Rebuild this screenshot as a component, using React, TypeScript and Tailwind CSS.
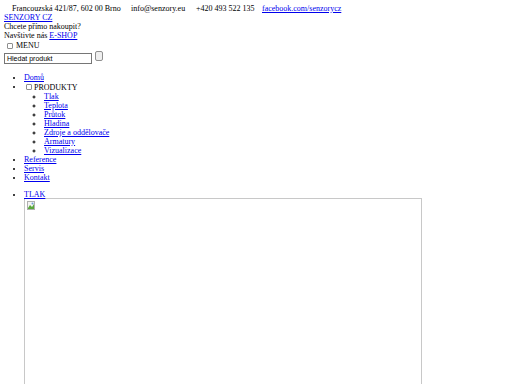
import React from 'react';

const Box: React.FC<{ className?: string }> = ({ className = '' }) => (
  <span className={`inline-block w-[6px] h-[6px] border border-[#8f8f8f] rounded-[1px] bg-white ${className}`}></span>
);

const A: React.FC<{ children: React.ReactNode }> = ({ children }) => (
  <a href="#" className="text-[#0000ee] underline">{children}</a>
);

const App: React.FC = () => {
  const sub = ['Tlak', 'Teplota', 'Průtok', 'Hladina', 'Zdroje a oddělovače', 'Armatury', 'Vizualizace'];

  return (
    <div className="min-h-[384px] bg-white text-black font-['Liberation_Serif',serif] text-[8px] leading-[9px] px-[4px] pt-[4px] overflow-hidden">
      {/* top info line */}
      <div className="flex pl-[8px] whitespace-nowrap">
        <span className="w-[119px]">Francouzská 421/87, 602 00 Brno</span>
        <span className="w-[65px]">info@senzory.eu</span>
        <span className="w-[66px]">+420 493 522 135</span>
        <A>facebook.com/senzorycz</A>
      </div>
      <div><A>SENZORY CZ</A></div>
      <div>Chcete přímo nakoupit?</div>
      <div>Navštivte nás <A>E-SHOP</A></div>
      <div className="flex items-center h-[11px] pl-[3px] gap-[3px]">
        <Box />
        <span>MENU</span>
      </div>
      <div className="flex items-start gap-[3px]">
        <div className="w-[88px] h-[11px] mt-[2px] border border-[#767676] px-[2px] font-['Liberation_Sans',sans-serif] text-[7px] leading-[9px]">Hledat produkt</div>
        <div className="w-[8px] h-[10px] border border-[#8f8f8f] rounded-[2px] bg-[#efefef]"></div>
      </div>

      <ul className="list-disc pl-[20px] mt-[9px]">
        <li><A>Domů</A></li>
        <li>
          <span className="inline-flex items-center h-[10px] gap-[2px] pl-[2px] align-top"><Box /> PRODUKTY</span>
          <ul className="list-[circle] pl-[20px]">
            {sub.map((s) => (
              <li key={s}><A>{s}</A></li>
            ))}
          </ul>
        </li>
        <li><A>Reference</A></li>
        <li><A>Servis</A></li>
        <li><A>Kontakt</A></li>
      </ul>

      <ul className="list-disc pl-[20px] mt-[8px]">
        <li>
          <A>TLAK</A>
          <div className="w-[398px] h-[200px] -mt-[1px] border border-[#c8c8c8] p-[2px]">
            <svg width="8" height="9" viewBox="0 0 8 9">
              <rect x="0.5" y="0.5" width="7" height="8" fill="#f4f4f4" stroke="#b0b0b0" />
              <path d="M1 7 L3 4 L5 6 L7 3 L7 8 L1 8 Z" fill="#5aa83c" />
              <circle cx="5.5" cy="2.5" r="1" fill="#6a9ad6" />
            </svg>
          </div>
        </li>
      </ul>
    </div>
  );
};

export default App;
